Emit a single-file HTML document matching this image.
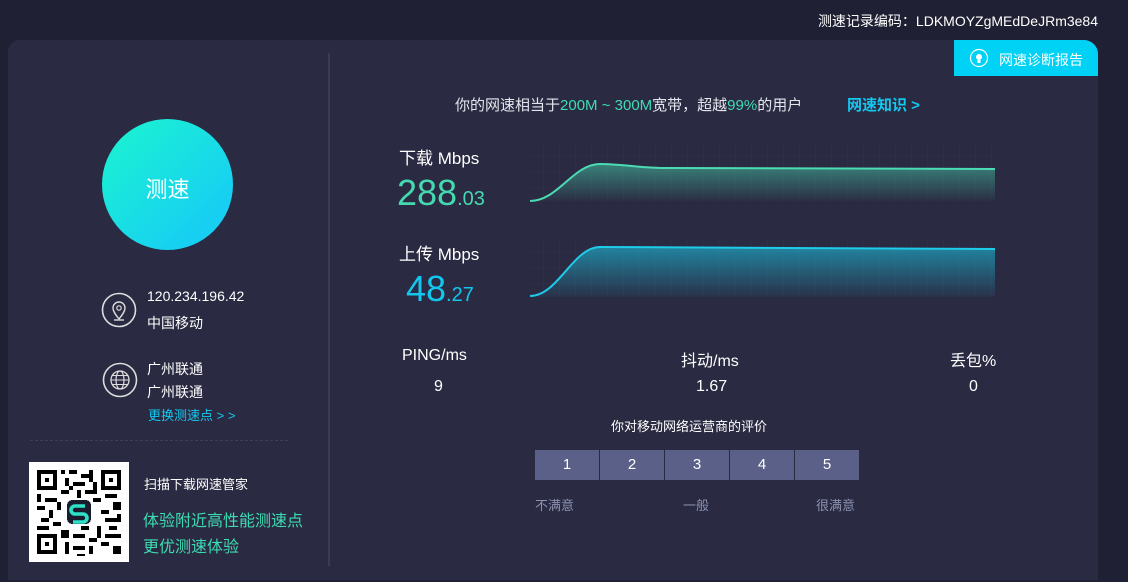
<!DOCTYPE html>
<html><head><meta charset="utf-8"><style>
*{margin:0;padding:0;box-sizing:border-box}
body{width:1128px;height:582px;background:#1f2033;font-family:"Liberation Sans","Noto Sans CJK SC",sans-serif;color:#fff;position:relative;overflow:hidden}
.a{position:absolute;white-space:nowrap}
#panel{position:absolute;left:8px;top:40px;width:1090px;height:540px;background:#2a2a42;border-radius:12px 16px 0 0}
</style></head><body>
<div class="a" style="right:30px;top:11px;font-size:14px">测速记录编码：LDKMOYZgMEdDeJRm3e84</div>
<div id="panel"></div>
<div class="a" style="left:954px;top:40px;width:144px;height:36px;background:#00d2f5;border-radius:0 14px 0 0"></div>
<svg class="a" style="left:969px;top:48px" width="20" height="20" viewBox="0 0 20 20"><circle cx="10" cy="10" r="8.5" fill="none" stroke="#fff" stroke-width="1.2"/><circle cx="10" cy="9" r="3" fill="#fff"/><rect x="8.5" y="12" width="3" height="3" fill="#fff"/></svg>
<div class="a" style="left:999px;top:50px;font-size:14px">网速诊断报告</div>
<div class="a" style="left:328px;top:53px;width:2px;height:513px;background:#3a3b58"></div>

<div class="a" style="left:102px;top:119px;width:131px;height:131px;border-radius:50%;background:linear-gradient(135deg,#1bf5cf,#17cff2 80%)"></div>
<div class="a" style="left:102px;top:172px;width:131px;text-align:center;font-size:22px">测速</div>

<svg class="a" style="left:101px;top:291px" width="36" height="38" viewBox="0 0 36 38"><circle cx="18" cy="19" r="16.5" fill="none" stroke="#ddd" stroke-width="1.6"/><path d="M18 28c-4-5-6-8-6-11a6 6 0 0 1 12 0c0 3-2 6-6 11z" fill="none" stroke="#ddd" stroke-width="1.4"/><circle cx="18" cy="17" r="2.2" fill="none" stroke="#ddd" stroke-width="1.2"/><path d="M13 29h10" stroke="#ddd" stroke-width="1.4"/></svg>
<div class="a" style="left:147px;top:288px;font-size:14px">120.234.196.42</div>
<div class="a" style="left:147px;top:313px;font-size:14px">中国移动</div>
<svg class="a" style="left:102px;top:361px" width="36" height="38" viewBox="0 0 36 38"><circle cx="18" cy="19" r="16.5" fill="none" stroke="#ddd" stroke-width="1.6"/><circle cx="18" cy="19" r="9" fill="none" stroke="#ddd" stroke-width="1.3"/><ellipse cx="18" cy="19" rx="4" ry="9" fill="none" stroke="#ddd" stroke-width="1.2"/><path d="M9 19h18M10.5 14.5h15M10.5 23.5h15" stroke="#ddd" stroke-width="1.1"/></svg>
<div class="a" style="left:147px;top:359px;font-size:14px">广州联通</div>
<div class="a" style="left:147px;top:382px;font-size:14px">广州联通</div>
<div class="a" style="left:148px;top:405px;font-size:13px;color:#15c8ef">更换测速点 &gt; &gt;</div>
<div class="a" style="left:30px;top:440px;width:258px;border-top:1px dashed #3d3e5a"></div>

<svg class="a" style="left:29px;top:462px" width="100" height="100" viewBox="0 0 25 25" shape-rendering="crispEdges"><rect width="25" height="25" fill="#fff"/>
<g fill="#000">
<path d="M2 2h5v5h-5zM18 2h5v5h-5zM2 18h5v5h-5z"/>
<path d="M8 2h1v1h-1zM10 2h2v1h-2zM13 3h2v1h-2zM9 4h1v2h-1zM11 5h3v1h-3zM15 2h1v3h-1zM8 7h2v1h-2zM12 7h1v2h-1zM14 7h3v1h-3zM2 8h1v2h-1zM4 9h3v1h-3zM16 9h2v1h-2zM19 8h3v1h-3zM21 10h2v2h-2zM2 11h2v1h-2zM5 12h1v2h-1zM18 12h2v1h-2zM3 14h2v1h-2zM19 14h3v1h-3zM2 16h3v1h-3zM17 16h1v3h-1zM8 17h2v2h-2zM11 18h3v1h-3zM15 19h2v1h-2zM19 18h4v1h-4zM9 20h1v3h-1zM11 21h3v1h-3zM15 21h1v2h-1zM18 20h2v1h-2zM21 21h2v2h-2zM12 23h2v0.5h-2zM10 6h1v1h-1zM16 5h1v2h-1zM7 10h1v2h-1zM6 15h2v1h-2zM20 16h2v1h-2zM22 13h1v2h-1zM13 16h2v1h-2z"/>
</g>
<path d="M3 3h3v3h-3zM19 3h3v3h-3zM3 19h3v3h-3z" fill="#fff"/>
<path d="M4 4h1v1h-1zM20 4h1v1h-1zM4 20h1v1h-1z" fill="#000"/>
<rect x="9" y="9" width="7" height="7" rx="1.5" fill="#fff"/><rect x="9.5" y="9.5" width="6" height="6" rx="1.3" fill="#1a1d2e"/>
<path d="M14 11h-2.5a1 1 0 0 0 0 2h2a1 1 0 0 1 0 2h-2.5" fill="none" stroke="#2fe0c8" stroke-width="0.9" shape-rendering="auto"/>
</svg>
<div class="a" style="left:144px;top:474px;font-size:13px">扫描下载网速管家</div>
<div class="a" style="left:143px;top:507px;font-size:16px;color:#3ddbb1">体验附近高性能测速点</div>
<div class="a" style="left:143px;top:533px;font-size:16px;color:#3ddbb1">更优测速体验</div>

<div class="a" style="left:455px;top:94px;font-size:15px;color:#e5e5ee">你的网速相当于<span style="color:#3fdcb3">200M ~ 300M</span>宽带，超越<span style="color:#3fdcb3">99%</span>的用户</div>
<div class="a" style="left:847px;top:94px;font-size:15px;color:#14c9f0;font-weight:bold">网速知识 &gt;</div>

<div class="a" style="left:399px;top:144px;font-size:17px">下载 Mbps</div>
<div class="a" style="left:397px;top:172px;font-size:36px;color:#44d9b0">288<span style="font-size:20px">.03</span></div>
<div class="a" style="left:399px;top:240px;font-size:17px">上传 Mbps</div>
<div class="a" style="left:406px;top:268px;font-size:36px;color:#13c6ee">48<span style="font-size:20px">.27</span></div>

<svg class="a" style="left:528px;top:140px" width="470" height="160" viewBox="0 0 470 160">
<defs>
<pattern id="g" width="16" height="16" patternUnits="userSpaceOnUse"><path d="M16 0V16H0" fill="none" stroke="#313149" stroke-width="1"/></pattern>
<linearGradient id="f1" x1="0" y1="0" x2="0" y2="1"><stop offset="0" stop-color="#44c9a6" stop-opacity=".55"/><stop offset="1" stop-color="#44c9a6" stop-opacity=".03"/></linearGradient>
<linearGradient id="f2" x1="0" y1="0" x2="0" y2="1"><stop offset="0" stop-color="#1bbfdd" stop-opacity=".6"/><stop offset="1" stop-color="#1bbfdd" stop-opacity=".05"/></linearGradient>
</defs>
<rect x="2" y="2" width="465" height="60" fill="url(#g)"/>
<rect x="2" y="97" width="465" height="60" fill="url(#g)"/>
<path d="M2 61C30 61 45 24 72 24C95 24 110 28 140 28L467 29V61Z" fill="url(#f1)"/>
<path d="M2 61C30 61 45 24 72 24C95 24 110 28 140 28L467 29" fill="none" stroke="#4bdcb4" stroke-width="2"/>
<path d="M2 156C30 156 45 107 72 107L467 109V157H2Z" fill="url(#f2)"/>
<path d="M2 156C30 156 45 107 72 107L467 109" fill="none" stroke="#1ecbe8" stroke-width="2"/>
</svg>

<div class="a" style="left:402px;top:347px;font-size:16px">PING/ms</div>
<div class="a" style="left:434px;top:378px;font-size:16px">9</div>
<div class="a" style="left:681px;top:347px;font-size:16px">抖动/ms</div>
<div class="a" style="left:696px;top:378px;font-size:16px">1.67</div>
<div class="a" style="left:950px;top:347px;font-size:16px">丢包%</div>
<div class="a" style="left:969px;top:378px;font-size:16px">0</div>

<div class="a" style="left:611px;top:416px;font-size:13px">你对移动网络运营商的评价</div>
<div class="a" style="left:535px;top:450px;display:flex;gap:1px">
<div style="width:64px;height:30px;background:#5b6088;text-align:center;line-height:30px;font-size:15px">1</div>
<div style="width:64px;height:30px;background:#5b6088;text-align:center;line-height:30px;font-size:15px">2</div>
<div style="width:64px;height:30px;background:#5b6088;text-align:center;line-height:30px;font-size:15px">3</div>
<div style="width:64px;height:30px;background:#5b6088;text-align:center;line-height:30px;font-size:15px">4</div>
<div style="width:64px;height:30px;background:#5b6088;text-align:center;line-height:30px;font-size:15px">5</div>
</div>
<div class="a" style="left:535px;top:495px;font-size:13px;color:#8a90ae">不满意</div>
<div class="a" style="left:683px;top:495px;font-size:13px;color:#8a90ae">一般</div>
<div class="a" style="left:816px;top:495px;font-size:13px;color:#8a90ae">很满意</div>
</body></html>
